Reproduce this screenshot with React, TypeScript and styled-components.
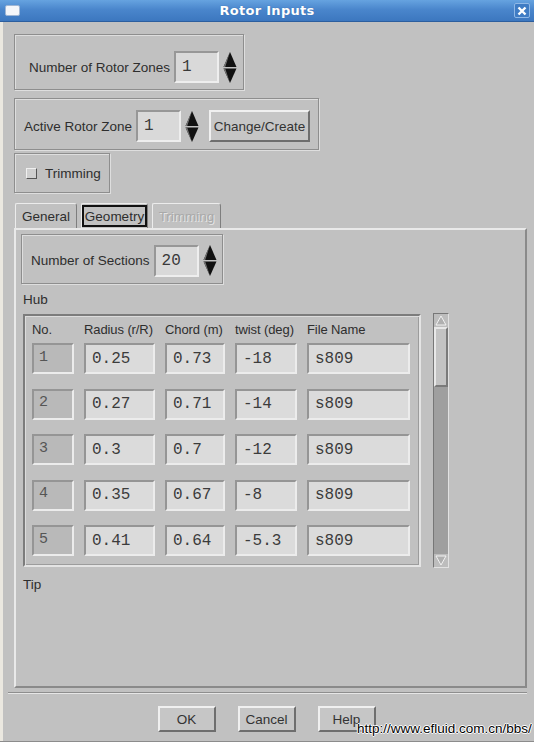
import React from 'react'
import styled, { createGlobalStyle } from 'styled-components'

const GlobalStyle = createGlobalStyle`
  html, body {
    margin: 0;
    padding: 0;
    background: #c1c1c1;
  }
  * { box-sizing: border-box; }
`

const sans = `"Liberation Sans", Arial, sans-serif`
const mono = `"Liberation Mono", "DejaVu Sans Mono", monospace`

type Row = { no: number; radius: string; chord: string; twist: string; file: string }

const rows: Row[] = [
  { no: 1, radius: '0.25', chord: '0.73', twist: '-18', file: 's809' },
  { no: 2, radius: '0.27', chord: '0.71', twist: '-14', file: 's809' },
  { no: 3, radius: '0.3', chord: '0.7', twist: '-12', file: 's809' },
  { no: 4, radius: '0.35', chord: '0.67', twist: '-8', file: 's809' },
  { no: 5, radius: '0.41', chord: '0.64', twist: '-5.3', file: 's809' },
]

const Window = styled.div`
  position: relative;
  width: 534px;
  height: 742px;
  display: flex;
  flex-direction: column;
  background: #c1c1c1;
  font-family: ${sans};
  font-size: 13px;
  color: #2e2e2e;
  overflow: hidden;
  border-bottom: 1px solid #8c8c8c;
`

const TitleBar = styled.div`
  height: 22px;
  flex: none;
  display: flex;
  align-items: center;
  justify-content: space-between;
  padding: 0 4px 0 5px;
  background: linear-gradient(#66a3e0, #4a86cc 45%, #3c77bf);
  border-bottom: 1px solid #2c5e9e;
`

const WinIcon = styled.div`
  width: 15px;
  height: 11px;
  border-radius: 2px;
  background: #f4f6fa;
  border: 1px solid #9fb6d4;
`

const Title = styled.div`
  font-family: "DejaVu Sans", sans-serif;
  font-weight: bold;
  font-size: 13px;
  color: #fff;
  text-shadow: 0 0 1px #2c5e9e;
  letter-spacing: 0.3px;
`

const CloseBtn = styled.div`
  width: 16px;
  height: 15px;
  border-radius: 2px;
  border: 1px solid #8fb8e6;
  background: #3f7cc4;
  display: flex;
  align-items: center;
  justify-content: center;
`

const Body = styled.div`
  flex: 1;
  display: flex;
  flex-direction: column;
  align-items: flex-start;
  border-left: 3px solid #ebe8e0;
  padding: 12px 7px 0 11px;
`

const Group = styled.div<{ $h: number; $pl: number; $pr: number; $pt?: number }>`
  display: flex;
  align-items: center;
  gap: 4px;
  height: ${({ $h }) => $h}px;
  padding: ${({ $pt }) => $pt ?? 0}px ${({ $pr }) => $pr}px 0 ${({ $pl }) => $pl}px;
  border: 1px solid #8e8e8e;
  box-shadow: inset 1px 1px 0 #dedede, 1px 1px 0 #dedede;
  flex: none;
`

const Label = styled.span`
  white-space: nowrap;
  font-size: 13.5px;
  color: #2e2e2e;
`

const SpinField = styled.div`
  width: 45px;
  height: 32px;
  display: flex;
  align-items: center;
  padding-left: 6px;
  background: #d9d9d9;
  border: 2px solid;
  border-color: #979797 #eeeeee #eeeeee #979797;
  font-family: ${mono};
  font-size: 16px;
  color: #3a3a3a;
`

const Arrows = styled.svg`
  flex: none;
`

const SpinArrows = () => (
  <Arrows width="14" height="33" viewBox="0 0 14 33">
    <polygon points="7,1 13.5,16 0.5,16" fill="#111" />
    <polygon points="7,1 0.5,16 2.2,16" fill="#777" />
    <polygon points="0.5,17.5 13.5,17.5 7,32" fill="#111" />
    <polygon points="0.5,17.5 2.2,17.5 7,32" fill="#777" />
  </Arrows>
)

const Spinner = ({ value }: { value: string }) => (
  <>
    <SpinField>{value}</SpinField>
    <SpinArrows />
  </>
)

const Button = styled.div<{ $w: number; $h: number }>`
  width: ${({ $w }) => $w}px;
  height: ${({ $h }) => $h}px;
  display: flex;
  align-items: center;
  justify-content: center;
  background: #c6c6c6;
  border: 2px solid;
  border-color: #f0f0f0 #6e6e6e #6e6e6e #f0f0f0;
  color: #333;
  font-size: 13.5px;
  white-space: nowrap;
`

const Check = styled.div`
  width: 11px;
  height: 11px;
  background: #cfcfcf;
  border: 1px solid;
  border-color: #f0f0f0 #555 #555 #f0f0f0;
  margin-right: 4px;
`

const Tabs = styled.div`
  display: flex;
  align-items: flex-end;
  gap: 4px;
  margin-top: 9px;
  padding-left: 1px;
  height: 26px;
`

const Tab = styled.div<{ $w: number; $disabled?: boolean }>`
  width: ${({ $w }) => $w}px;
  height: 25px;
  display: flex;
  align-items: center;
  justify-content: center;
  border: 1px solid;
  border-bottom: none;
  border-color: #ececec #7e7e7e #7e7e7e #ececec;
  border-radius: 2px 3px 0 0;
  font-size: 13.5px;
  color: ${({ $disabled }) => ($disabled ? '#a9a9a9' : '#2e2e2e')};
  text-shadow: ${({ $disabled }) => ($disabled ? '1px 1px 0 #e6e6e6' : 'none')};
`

const Focus = styled.div`
  align-self: stretch;
  flex: 1;
  margin: 1px 0 1px 0;
  display: flex;
  align-items: center;
  justify-content: center;
  border: 2px solid #111;
`

const TabPanel = styled.div`
  width: 513px;
  height: 460px;
  flex: none;
  display: flex;
  flex-direction: column;
  align-items: flex-start;
  padding: 4px 0 0 5px;
  border: 2px solid;
  border-color: #e9e9e9 #8a8a8a #8a8a8a #e9e9e9;
`

const Caption = styled.div<{ $mt: number }>`
  margin-top: ${({ $mt }) => $mt}px;
  margin-left: 2px;
  line-height: 16px;
  font-size: 13.5px;
`

const TableArea = styled.div`
  display: flex;
  align-items: flex-start;
  gap: 12px;
  margin-top: 6px;
  margin-left: 2px;
`

const TableFrame = styled.div`
  width: 398px;
  padding: 6px 8px 9px 7px;
  border: 2px solid;
  border-color: #7c7c7c #e4e4e4 #e4e4e4 #7c7c7c;
  box-shadow: inset 1px 1px 0 #dcdcdc, inset -1px -1px 0 #9c9c9c;
`

const columns = '42px 71px 60px 62px 103px'

const HeadRow = styled.div`
  display: grid;
  grid-template-columns: ${columns};
  column-gap: 10px;
  height: 16px;
  line-height: 16px;
  margin-bottom: 5px;
  white-space: nowrap;
  letter-spacing: -0.1px;
`

const DataGrid = styled.div`
  display: grid;
  grid-template-columns: ${columns};
  grid-auto-rows: 31px;
  column-gap: 10px;
  row-gap: 14.5px;
`

const Cell = styled.div<{ $readOnly?: boolean }>`
  display: flex;
  align-items: center;
  padding-left: ${({ $readOnly }) => ($readOnly ? 5 : 6)}px;
  background: ${({ $readOnly }) => ($readOnly ? '#b9b9b9' : '#dbdbdb')};
  border: 2px solid;
  border-color: #959595 #ececec #ececec #959595;
  font-family: ${mono};
  font-size: ${({ $readOnly }) => ($readOnly ? 15 : 16)}px;
  color: ${({ $readOnly }) => ($readOnly ? '#555' : '#3c3c3c')};
  padding-bottom: ${({ $readOnly }) => ($readOnly ? 3 : 0)}px;
`

const ScrollBar = styled.div`
  width: 16px;
  height: 255px;
  margin-top: -1px;
  display: flex;
  flex-direction: column;
  background: #9f9f9f;
  border: 1px solid;
  border-color: #777 #e2e2e2 #e2e2e2 #777;
`

const ScrollBtn = styled.div`
  height: 13px;
  flex: none;
  display: flex;
  align-items: center;
  justify-content: center;
  background: #bdbdbd;
`

const Thumb = styled.div`
  height: 60px;
  flex: none;
  background: #c3c3c3;
  border: 2px solid;
  border-color: #e8e8e8 #7a7a7a #7a7a7a #e8e8e8;
`

const Gap = styled.div`
  flex: 1;
`

const Separator = styled.div`
  width: 519px;
  margin: 4px 0 0 -6px;
  border-top: 1px solid #8e8e8e;
  border-bottom: 1px solid #e6e6e6;
`

const Footer = styled.div`
  align-self: stretch;
  display: flex;
  justify-content: center;
  gap: 22px;
  margin-top: 12px;
  margin-left: -8px;
`

const Watermark = styled.div`
  position: absolute;
  left: 357px;
  top: 721px;
  font-family: "Liberation Sans Narrow", "Liberation Sans", Arial, sans-serif;
  font-size: 13.5px;
  color: #000;
  text-shadow: -1px 0 0 #fff, 1px 0 0 #fff, 0 -1px 0 #fff, 0 1px 0 #fff;
`

export default function App() {
  return (
    <Window>
      <GlobalStyle />
      <TitleBar>
        <WinIcon />
        <Title>Rotor Inputs</Title>
        <CloseBtn>
          <svg width="10" height="10" viewBox="0 0 10 10">
            <path d="M1.5 1.5 L8.5 8.5 M8.5 1.5 L1.5 8.5" stroke="#fff" strokeWidth="2.4" />
          </svg>
        </CloseBtn>
      </TitleBar>

      <Body>
        <Group $h={56} $pl={14} $pr={6} $pt={10}>
          <Label>Number of Rotor Zones</Label>
          <Spinner value="1" />
        </Group>

        <Group $h={52} $pl={9} $pr={8} $pt={4} style={{ marginTop: 8 }}>
          <Label>Active Rotor Zone</Label>
          <Spinner value="1" />
          <Button $w={101} $h={32} style={{ marginLeft: 6 }}>Change/Create</Button>
        </Group>

        <Group $h={40} $pl={11} $pr={8} style={{ marginTop: 3 }}>
          <Check />
          <Label>Trimming</Label>
        </Group>

        <Tabs>
          <Tab $w={62}>General</Tab>
          <Tab $w={67}><Focus>Geometry</Focus></Tab>
          <Tab $w={69} $disabled>Trimming</Tab>
        </Tabs>

        <TabPanel>
          <Group $h={50} $pl={9} $pr={5} $pt={3}>
            <Label>Number of Sections</Label>
            <Spinner value="20" />
          </Group>

          <Caption $mt={8}>Hub</Caption>

          <TableArea>
            <TableFrame>
              <HeadRow>
                <span>No.</span>
                <span>Radius (r/R)</span>
                <span>Chord (m)</span>
                <span>twist (deg)</span>
                <span>File Name</span>
              </HeadRow>
              <DataGrid>
                {rows.map((r) => (
                  <React.Fragment key={r.no}>
                    <Cell $readOnly>{r.no}</Cell>
                    <Cell>{r.radius}</Cell>
                    <Cell>{r.chord}</Cell>
                    <Cell>{r.twist}</Cell>
                    <Cell>{r.file}</Cell>
                  </React.Fragment>
                ))}
              </DataGrid>
            </TableFrame>

            <ScrollBar>
              <ScrollBtn>
                <svg width="12" height="11" viewBox="0 0 12 11">
                  <polygon points="6,1 11,10 1,10" fill="#b0b0b0" stroke="#f2f2f2" strokeWidth="1" />
                </svg>
              </ScrollBtn>
              <Thumb />
              <Gap />
              <ScrollBtn>
                <svg width="12" height="11" viewBox="0 0 12 11">
                  <polygon points="1,1 11,1 6,10" fill="#b0b0b0" stroke="#f2f2f2" strokeWidth="1" />
                </svg>
              </ScrollBtn>
            </ScrollBar>
          </TableArea>

          <Caption $mt={9}>Tip</Caption>
        </TabPanel>

        <Separator />

        <Footer>
          <Button $w={58} $h={26}>OK</Button>
          <Button $w={58} $h={26}>Cancel</Button>
          <Button $w={58} $h={26}>Help</Button>
        </Footer>
      </Body>

      <Watermark>http://www.efluid.com.cn/bbs/</Watermark>
    </Window>
  )
}
